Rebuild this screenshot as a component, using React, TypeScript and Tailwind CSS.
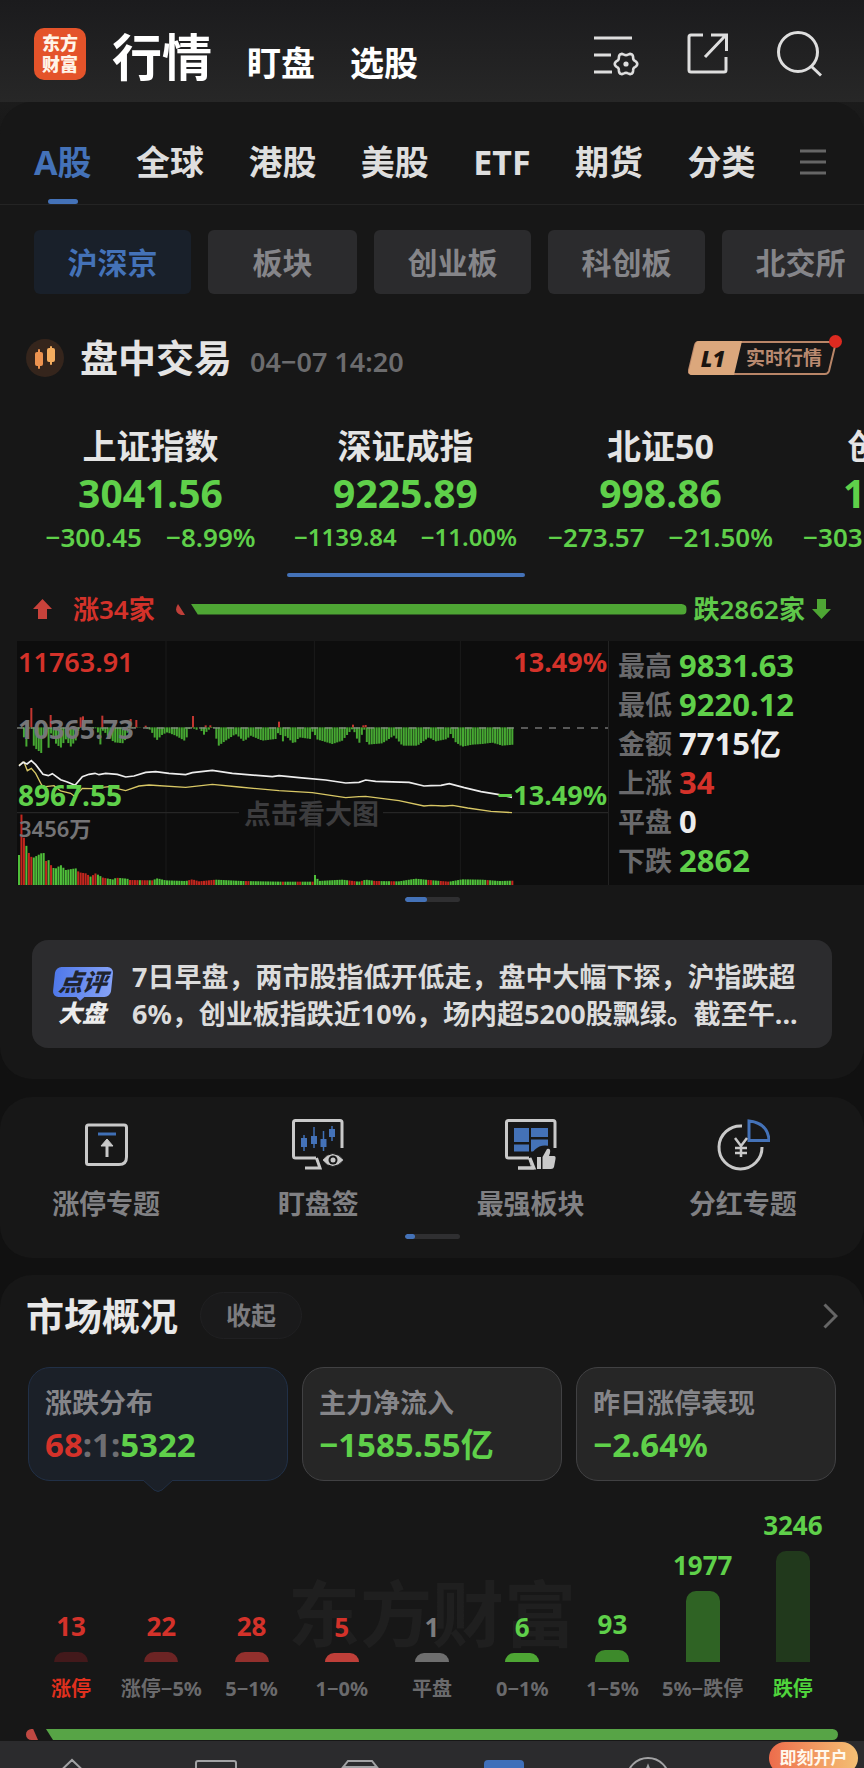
import { useState } from "react";
import clsx from "clsx";

const TABS = ["A股", "全球", "港股", "美股", "ETF", "期货", "分类"];

const BOARDS = [
  { label: "沪深京", width: "w-[157px]" },
  { label: "板块", width: "w-[149px]" },
  { label: "创业板", width: "w-[157px]" },
  { label: "科创板", width: "w-[157px]" },
  { label: "北交所", width: "w-[157px]" },
];

const INDICES = [
  { name: "上证指数", value: "3041.56", change: "−300.45", percent: "−8.99%" },
  { name: "深证成指", value: "9225.89", change: "−1139.84", percent: "−11.00%", small: true },
  { name: "北证50", value: "998.86", change: "−273.57", percent: "−21.50%" },
  { name: "创业板指", value: "1796.99", change: "−303.10", percent: "−14.43%" },
];

const STATS = [
  { label: "最高", value: "9831.63", color: "text-[#5fd04a]" },
  { label: "最低", value: "9220.12", color: "text-[#5fd04a]" },
  { label: "金额", value: "7715亿", color: "text-[#ececec]" },
  { label: "上涨", value: "34", color: "text-[#d4322a]" },
  { label: "平盘", value: "0", color: "text-[#ececec]" },
  { label: "下跌", value: "2862", color: "text-[#5fd04a]" },
];

const DISTRIBUTION = [
  { label: "涨停", count: 13, height: 10, bar: "bg-[#43191b]", text: "text-[#d4322a]", labelColor: "text-[#e0301e]" },
  { label: "涨停−5%", count: 22, height: 10, bar: "bg-[#6c2424]", text: "text-[#d4322a]" },
  { label: "5−1%", count: 28, height: 10, bar: "bg-[#93302d]", text: "text-[#d4322a]" },
  { label: "1−0%", count: 5, height: 9, bar: "bg-[#bf3f39]", text: "text-[#d4322a]" },
  { label: "平盘", count: 1, height: 9, bar: "bg-[#6e6e6e]", text: "text-[#7c7c7e]" },
  { label: "0−1%", count: 6, height: 9, bar: "bg-[#4ea634]", text: "text-[#5fd04a]" },
  { label: "1−5%", count: 93, height: 12, bar: "bg-[#3d8a2b]", text: "text-[#5fd04a]" },
  { label: "5%−跌停", count: 1977, height: 71, bar: "bg-[#2f6324]", text: "text-[#5fd04a]" },
  { label: "跌停", count: 3246, height: 111, bar: "bg-[#21391c]", text: "text-[#5fd04a]", labelColor: "text-[#4fd43c]" },
];

type Point = [number, number];

// Chart space: three units per pixel, zero line at y=292, volume base at y=765
const MOMENTUM: Point[] = [
  [57, 0], [72, 4], [80, 78], [88, 4], [98, 4], [105, 60], [128, 78], [135, 25], [143, 4], [148, 66], [158, 8], [170, 48],
  [185, 62], [200, 35], [215, 58], [230, 40], [240, 2], [295, 3], [303, 58], [312, 8], [330, 30], [345, 45],
  [375, 48], [390, 3], [435, 0], [455, 8], [472, 40], [490, 22], [505, 15], [530, 25], [560, 42], [570, 5],
  [582, 0], [590, 10], [600, 0], [615, 22], [622, 14], [635, 2], [648, 2], [655, 58], [680, 40], [710, 20], [735, 42], [755, 25], [790, 40], [830, 35],
  [842, 5], [848, 50], [860, 25], [885, 50], [900, 30], [935, 35], [944, 0], [950, 35], [1000, 50], [1030, 40],
  [1055, 10], [1062, 3], [1080, 50], [1095, 2], [1105, 52], [1150, 48], [1185, 25], [1210, 55], [1255, 55],
  [1290, 30], [1310, 42], [1345, 35], [1355, 20], [1370, 45], [1390, 58], [1420, 52], [1450, 50], [1480, 46],
  [1510, 55], [1543, 52],
];

const SPIKES: Point[] = [
  [97, 58], [155, 37], [245, 30], [252, 33], [310, 35], [395, 25], [412, 22], [440, 5], [582, 34],
  [620, 6], [634, 6], [840, 17], [1062, 8], [1093, 6], [1100, 7],
];

const VOLUME: Point[] = [
  [60, 90], [67, 215], [75, 140], [83, 115], [90, 95], [100, 80], [130, 97], [137, 95], [141, 72], [150, 75],
  [158, 55], [168, 48], [185, 60], [200, 45], [230, 50], [240, 38], [260, 35], [275, 25], [290, 35], [312, 22],
  [345, 16], [350, 22], [385, 19], [390, 15], [460, 14], [475, 20], [500, 14], [560, 12], [580, 17], [600, 11],
  [650, 16], [730, 12], [850, 10], [944, 10], [950, 40], [957, 12], [1030, 16], [1080, 10], [1100, 16],
  [1130, 12], [1200, 11], [1250, 19], [1290, 15], [1350, 10], [1390, 17], [1450, 16], [1500, 12], [1543, 13],
];

const RED_VOLUME: Point[] = [
  [64, 78], [86, 102], [141, 147], [152, 161], [232, 268], [280, 292], [310, 326], [350, 356], [388, 420],
  [428, 446], [455, 462], [565, 645], [740, 750], [850, 857], [890, 905], [935, 943], [1045, 1068], [1085, 1092],
  [1125, 1145], [1175, 1190], [1285, 1300], [1320, 1350], [1460, 1468], [1538, 1545],
];

const BAR_XS = Array.from({ length: 201 }, (_, i) => 60 + i * 7.4);

function heightAt(points: Point[], x: number) {
  const next = points.findIndex((p) => p[0] >= x);
  if (next === -1) return points[points.length - 1][1];
  if (next === 0) return points[0][1];
  const [x0, y0] = points[next - 1];
  const [x1, y1] = points[next];
  return y0 + ((y1 - y0) * (x - x0)) / (x1 - x0);
}

const INDEX_LINE =
  "60,408 72,397 84,402 97,392 110,404 132,433 148,437 160,431 185,449 205,456 228,466 250,440 270,433 288,430 300,434 320,430 355,433 380,441 405,438 440,427 470,425 510,430 560,434 580,428 640,421 700,430 820,440 840,437 900,443 980,450 1040,459 1080,457 1100,450 1130,454 1230,457 1275,468 1296,467 1326,466 1351,461 1396,473 1446,485 1496,493 1539,502";
const AVERAGE_LINE =
  "60,405 75,396 85,422 97,415 110,430 128,465 140,470 165,467 185,483 215,490 228,500 250,475 280,476 330,470 380,482 420,468 450,465 560,472 640,463 720,471 840,482 940,488 1040,503 1080,500 1100,499 1200,512 1275,528 1296,526 1336,528 1361,526 1406,534 1476,544 1539,548";

function MinuteChart() {
  return (
    <svg viewBox="54 33 1773 732" preserveAspectRatio="none" className="h-full w-full" aria-hidden="true">
      <g stroke="#1b1b1b" strokeWidth="3">
        <path d="M501 33V765M946 33V765M1384 33V765" />
        <path d="M54 548H720M1152 548H1827" stroke="#262626" strokeWidth="4" />
      </g>
      {BAR_XS.map((x) => (
        <rect key={x} x={x - 3} y="292" width="6" height={heightAt(MOMENTUM, x)} fill="#46a832" />
      ))}
      {SPIKES.map(([x, h]) => (
        <rect key={x} x={x - 3} y={292 - h} width="6" height={h} fill="#c23630" />
      ))}
      <path d="M54 294H1827" stroke="#8b8b8b" strokeWidth="4" strokeDasharray="21 21" strokeOpacity="0.8" />
      {BAR_XS.map((x) => {
        const h = heightAt(VOLUME, x);
        const red = RED_VOLUME.some(([from, to]) => x >= from && x <= to);
        return <rect key={x} x={x - 3} y={765 - h} width="6" height={h} fill={red ? "#c3271e" : "#4fbf3a"} />;
      })}
      <polyline points={AVERAGE_LINE} fill="none" stroke="#d8c765" strokeWidth="4" />
      <polyline points={INDEX_LINE} fill="none" stroke="#ededed" strokeWidth="5" />
    </svg>
  );
}

// Six-lobed outline around (33, 32)
const GEAR = Array.from({ length: 60 }, (_, i) => {
  const angle = (i * Math.PI) / 30;
  const r = 10 + 1.3 * Math.cos(6 * angle);
  return `${(33 + r * Math.cos(angle)).toFixed(2)},${(32 + r * Math.sin(angle)).toFixed(2)}`;
}).join(" ");

function FilterIcon() {
  return (
    <svg width="46" height="44" viewBox="0 0 46 44" fill="none" stroke="#dedede" strokeWidth="3">
      <path d="M1 6H39M1 23H18M1 40H19" />
      <polygon points={GEAR} strokeWidth="2.6" strokeLinejoin="round" />
      <circle cx="33" cy="32" r="2.6" fill="#dedede" stroke="none" />
    </svg>
  );
}

function ShareIcon() {
  return (
    <svg width="42" height="42" viewBox="0 0 42 42" fill="none" stroke="#dedede" strokeWidth="3">
      <path strokeLinejoin="round" d="M16 2H4Q2 2 2 4V37Q2 39 4 39H37Q39 39 39 37V24" />
      <path d="M24 2H39.5V18M38 3L18 24" />
    </svg>
  );
}

function SearchIcon() {
  return (
    <svg width="46" height="46" viewBox="0 0 46 46" fill="none" stroke="#dedede" strokeWidth="3">
      <circle cx="21" cy="21" r="19.5" />
      <path d="M34 35L44 44.5" />
    </svg>
  );
}

function CandleIcon() {
  return (
    <svg width="38" height="38" viewBox="0 0 38 38" className="shrink-0">
      <circle cx="19" cy="19" r="19" fill="#35251c" />
      <g fill="#ed9350">
        <rect x="9" y="13" width="8" height="14" rx="2" />
        <rect x="12" y="10" width="2" height="20" rx="1" />
      </g>
      <g fill="#f5ad5f">
        <rect x="21" y="9" width="8" height="14" rx="2" />
        <rect x="24" y="7" width="2" height="19" rx="1" />
      </g>
    </svg>
  );
}

function MonitorFrame() {
  return (
    <path
      d="M24 39H3.5Q1.5 39 1.5 37V3.5Q1.5 1.5 3.5 1.5H48Q50 1.5 50 3.5V29M13 49H28L24.5 39"
      fill="none"
      stroke="#c9c9c9"
      strokeWidth="3"
    />
  );
}

function LimitUpIcon() {
  return (
    <svg width="52" height="52" viewBox="0 0 52 52" fill="none" stroke="#c9c9c9" strokeWidth="3">
      <path d="M8.5 6H44Q46.5 6 46.5 8.5V38Q46.5 45.5 39 45.5H8.5Q6.5 45.5 6.5 43.5V8Q6.5 6 8.5 6Z" />
      <path d="M18 15H36" stroke="#3f6fb5" />
      <path d="M27 38V25" />
      <path d="M21 27L27 20L33 27Z" fill="#c9c9c9" strokeWidth="1" />
    </svg>
  );
}

function WatchIcon() {
  return (
    <svg width="52" height="52" viewBox="0 0 52 52">
      <MonitorFrame />
      <path d="M12 16V32M22 8V29M31.5 12V32M40 7V22" stroke="#3f6fb5" strokeWidth="1.5" />
      <path d="M9 19h6v9H9zM19 17h6v8h-6zM28.5 20h6v8h-6zM37 10h6v8h-6z" fill="#4472b8" />
      <path d="M30 41Q40.5 28 52 41Q40.5 54 30 41Z" fill="#c9c9c9" stroke="#171717" strokeWidth="1" />
      <circle cx="41" cy="41" r="4.5" fill="#171717" />
      <circle cx="41" cy="41" r="2.5" fill="#c9c9c9" />
    </svg>
  );
}

function StrongBoardIcon() {
  return (
    <svg width="52" height="52" viewBox="0 0 52 52">
      <MonitorFrame />
      <path d="M9 9h15v14H9zM26 9h17v9H26zM9 25.5h15v7H9zM26 20.5h17v12H26z" fill="#4472b8" />
      <circle cx="40" cy="41" r="14.5" fill="#171717" />
      <path d="M13 49H29L25 39" fill="none" stroke="#c9c9c9" strokeWidth="3" />
      <path d="M32 38h4v12h-4zM37.5 38L42 30Q46 29 45 34L44 37H49Q51 37 50.5 40L49 48Q48.5 50 46 50H37.5Z" fill="#c9c9c9" />
    </svg>
  );
}

function DividendIcon() {
  return (
    <svg width="54" height="52" viewBox="0 0 54 52" fill="none" stroke="#c9c9c9" strokeWidth="3">
      <path d="M26 7A21.5 21.5 0 1 0 46 28" />
      <path d="M33 2V21.5H53Q52 4 33 2Z" stroke="#4472b8" />
      <path d="M19 19L25 27L31 19M25 27V38M19 29H31M19 34H31" strokeWidth="2.5" />
    </svg>
  );
}

const TOPICS = [
  { label: "涨停专题", Icon: LimitUpIcon },
  { label: "盯盘签", Icon: WatchIcon },
  { label: "最强板块", Icon: StrongBoardIcon },
  { label: "分红专题", Icon: DividendIcon },
];

function Pager({ active }: { active: string }) {
  return (
    <div className="mx-auto mt-3 h-[5px] w-[55px] overflow-hidden rounded-full bg-[#2f2f31]">
      <div className={clsx("h-full rounded-full bg-[#4472b8]", active)} />
    </div>
  );
}

function Header() {
  return (
    <header className="flex h-[102px] shrink-0 items-start bg-linear-to-b from-[#1b1b1d] to-[#272727] pr-[41px] pl-[34px]">
      <div className="mt-7 flex size-[52px] flex-col items-center justify-center rounded-[10px] bg-[#e4532a] text-[18px] leading-[21px] font-black text-[#fff4e8]">
        <span>东方</span>
        <span>财富</span>
      </div>
      <nav className="mt-[21px] ml-[26px] flex items-baseline gap-[35px] font-bold text-white">
        <button className="text-[50px] leading-[72px]">行情</button>
        <button className="text-[34px]">盯盘</button>
        <button className="text-[34px]">选股</button>
      </nav>
      <div className="mt-[31px] ml-auto flex items-center gap-12">
        <button aria-label="设置">
          <FilterIcon />
        </button>
        <button aria-label="分享">
          <ShareIcon />
        </button>
        <button aria-label="搜索">
          <SearchIcon />
        </button>
      </div>
    </header>
  );
}

function IndexStrip() {
  return (
    <div className="mt-[42px] flex overflow-hidden pl-[23px]">
      {INDICES.map((item) => (
        <button key={item.name} className="flex w-[255px] shrink-0 flex-col items-center text-[#5fd04a]">
          <span className="text-[34px] leading-[44px] font-bold text-[#e4e4e4]">{item.name}</span>
          <span className="text-[39px] leading-[50px] font-bold">{item.value}</span>
          <span
            className={clsx(
              "flex gap-6 leading-[38px] font-semibold whitespace-nowrap",
              item.small ? "text-[24px]" : "text-[26px]"
            )}
          >
            <span>{item.change}</span>
            <span>{item.percent}</span>
          </span>
          <span
            className={clsx("mt-[17px] h-1 w-[238px] rounded-full", item.name === "深证成指" ? "bg-[#4472b8]" : "bg-transparent")}
          />
        </button>
      ))}
    </div>
  );
}

function Market() {
  const [tab, setTab] = useState("A股");
  const [board, setBoard] = useState("沪深京");

  return (
    <section className="shrink-0 rounded-4xl bg-[#171717] pb-[31px]">
      {/* Market tabs */}
      <nav className="flex h-[103px] justify-between border-b border-[#242424] pr-[38px] pl-[34px]">
        {TABS.map((name) => (
          <button
            key={name}
            onClick={() => setTab(name)}
            className={clsx("relative pt-[19px] text-[34px] font-bold", tab === name ? "text-[#4472b8]" : "text-[#dedede]")}
          >
            {name}
            {tab === name && (
              <span className="absolute bottom-0 left-1/2 h-[5px] w-[30px] -translate-x-1/2 rounded-full bg-[#4472b8]" />
            )}
          </button>
        ))}
        <button aria-label="更多" className="pt-[17px]">
          <svg width="26" height="28" viewBox="0 0 26 28" stroke="#666" strokeWidth="3">
            <path d="M0 3H26M0 14H26M0 25H26" />
          </svg>
        </button>
      </nav>

      {/* Boards */}
      <div className="flex gap-[17px] overflow-hidden pt-[25px] pl-[34px]">
        {BOARDS.map((item) => (
          <button
            key={item.label}
            onClick={() => setBoard(item.label)}
            className={clsx(
              "h-16 shrink-0 rounded-md text-[30px] font-bold",
              item.width,
              board === item.label ? "bg-[#19202a] text-[#4472b8]" : "bg-[#2b2b2d] text-[#858589]"
            )}
          >
            {item.label}
          </button>
        ))}
      </div>

      {/* Session */}
      <div className="mt-[40px] flex h-12 items-center px-[26px]">
        <CandleIcon />
        <div className="ml-4 flex items-baseline gap-[18px]">
          <h2 className="text-[38px] leading-[48px] font-bold text-[#e4e4e4]">盘中交易</h2>
          <time className="text-[27px] font-semibold text-[#6c6c6e]">04−07 14:20</time>
        </div>
        <button className="relative ml-auto flex h-[34px] w-[150px] items-center">
          <svg width="150" height="34" viewBox="0 0 150 34" className="absolute inset-0" aria-hidden="true">
            <path d="M10 1H148L141 30Q140 33 137 33H4Q0 33 1 29L7 4Q8 1 10 1Z" fill="none" stroke="#b98668" strokeWidth="2" />
            <path d="M10 0H54L46 34H4Q0 34 1 29L7 4Q8 0 11 0Z" fill="#dba77c" />
          </svg>
          <span className="relative w-[50px] text-center text-[22px] leading-[34px] font-black text-[#1b1510] italic">L1</span>
          <span className="relative ml-2 text-[19px] leading-[34px] font-bold whitespace-nowrap text-[#b98a70]">实时行情</span>
          <span className="absolute -top-1.5 -right-1 size-[13px] rounded-full bg-[#dd2a20]" />
        </button>
      </div>

      <IndexStrip />

      {/* Advancers and decliners */}
      <div className="mt-4 flex h-8 items-center px-[33px] text-[26px] font-semibold">
        <svg width="19" height="20" viewBox="0 0 19 20" fill="#c8423b">
          <path d="M9.5 0L19 10H14V20H5V10H0Z" />
        </svg>
        <span className="ml-[21px] text-[#d4322a]">涨34家</span>
        <svg width="10" height="11" viewBox="0 0 10 11" className="ml-5" fill="#bf3f39">
          <path d="M3 0L10 11H6Q-2 8 3 0Z" />
        </svg>
        <div className="ml-1.5 h-[11px] flex-1 rounded-r-full bg-[#4ea634] [clip-path:polygon(0_0,100%_0,100%_100%,7px_100%)]" />
        <span className="ml-[7px] text-[#5fc84a]">跌2862家</span>
        <svg width="19" height="20" viewBox="0 0 19 20" className="ml-[7px]" fill="#4ea634">
          <path d="M9.5 20L19 10H14V0H5V10H0Z" />
        </svg>
      </div>

      {/* Minute chart */}
      <div className="mt-4 ml-[17px] flex h-[244px] bg-[#0d0d0d]">
        <div className="relative min-w-0 flex-1 text-[27px] leading-[30px] font-semibold">
          <MinuteChart />
          <span className="absolute top-1.5 left-px text-[#d4322a]">11763.91</span>
          <span className="absolute top-[73px] left-px font-bold text-[#767678]">10365.73</span>
          <span className="absolute top-[139px] left-px text-[28px] font-bold text-[#5fd04a]">8967.55</span>
          <span className="absolute top-[172px] left-0.5 text-[22px] text-[#747476]">3456万</span>
          <span className="absolute top-1.5 right-px font-bold text-[#d4322a]">13.49%</span>
          <span className="absolute top-[139px] right-px font-bold text-[#5fd04a]">−13.49%</span>
          <button className="absolute top-[158px] left-[227px] font-bold text-[#3c3c3e]">点击看大图</button>
        </div>
        <dl className="w-64 border-l border-[#222] py-[5px] pl-[9px]">
          {STATS.map((item) => (
            <div key={item.label} className="flex h-[39px] items-center gap-[7px]">
              <dt className="text-[27px] leading-[39px] font-bold text-[#69696b]">{item.label}</dt>
              <dd className={clsx("text-[31px] leading-[39px] font-bold", item.color)}>{item.value}</dd>
            </div>
          ))}
        </dl>
      </div>
      <Pager active="w-[22px]" />

      {/* Commentary */}
      <a href="#comment" className="mx-8 mt-[38px] flex rounded-2xl bg-[#2c2c2e] pt-[18px] pr-6 pb-4 pl-[22px]">
        <span className="mt-[9px] flex w-[60px] shrink-0 flex-col items-start text-[24px] font-black italic">
          <span className="relative w-[58px] -skew-x-6 rounded-md bg-linear-to-r from-[#4f78ea] to-[#86a2f6] text-center leading-[30px] text-[#20242f]">
            点评
            <span className="absolute -bottom-1 left-6 border-x-4 border-t-4 border-x-transparent border-t-[#6d8cf0]" />
          </span>
          <span className="mt-0.5 ml-1 leading-[28px] text-[#ececec]">大盘</span>
        </span>
        <span className="ml-[18px] text-[27px] leading-[37px] font-bold text-[#dcdcdc]">
          7日早盘，两市股指低开低走，盘中大幅下探，沪指跌超6%，创业板指跌近10%，场内超5200股飘绿。截至午...
        </span>
      </a>
    </section>
  );
}

function Topics() {
  return (
    <section className="mt-[18px] shrink-0 rounded-4xl bg-[#171717] pt-[22px] pb-[19px]">
      <div className="grid grid-cols-4 pr-[15px]">
        {TOPICS.map(({ label, Icon }) => (
          <a key={label} href="#topic" className="flex flex-col items-center gap-[15px]">
            <Icon />
            <span className="text-[27px] leading-[36px] font-bold text-[#808083]">{label}</span>
          </a>
        ))}
      </div>
      <Pager active="w-2.5" />
    </section>
  );
}

const CARD = "relative rounded-[22px] border pt-4 pb-3 pl-4 text-left";

function Overview() {
  return (
    <section className="mt-[17px] shrink-0 rounded-t-4xl bg-[#171717] px-[26px] pt-[17px] pb-px">
      <div className="flex h-[47px] items-center">
        <h2 className="text-[38px] font-bold text-[#e8e8e8]">市场概况</h2>
        <button className="ml-[22px] h-full w-[102px] rounded-full border border-[#202022] bg-[#1a1a1b] text-[25px] font-bold text-[#7c7c7f]">
          收起
        </button>
        <button aria-label="查看详情" className="ml-auto">
          <svg width="15" height="26" viewBox="0 0 15 26" fill="none" stroke="#666" strokeWidth="3">
            <path d="M1.5 1.5L13 13L1.5 24.5" />
          </svg>
        </button>
      </div>

      <div className="mx-0.5 mt-7 grid grid-cols-3 gap-3.5">
        <button className={clsx(CARD, "border-[#213047] bg-[#1b2028]")}>
          <span className="block text-[27px] leading-[38px] font-bold text-[#858589]">涨跌分布</span>
          <span className="block text-[33px] leading-[46px] font-bold text-[#5fd04a]">
            <span className="text-[#d4322a]">68</span>
            <span className="text-[#6e6e72]">:1:</span>5322
          </span>
          <svg width="30" height="12" viewBox="0 0 30 12" className="absolute top-full left-1/2 -translate-x-1/2">
            <path d="M0 0L11 10Q15 13 19 10L30 0Z" fill="#1b2028" />
            <path d="M0 0L11 10Q15 13 19 10L30 0" fill="none" stroke="#213047" />
          </svg>
        </button>
        <button className={clsx(CARD, "border-[#414143] bg-[#262626]")}>
          <span className="block text-[27px] leading-[38px] font-bold text-[#858589]">主力净流入</span>
          <span className="block text-[33px] leading-[46px] font-bold text-[#5fd04a]">−1585.55亿</span>
        </button>
        <button className={clsx(CARD, "border-[#414143] bg-[#262626]")}>
          <span className="block text-[27px] leading-[38px] font-bold text-[#858589]">昨日涨停表现</span>
          <span className="block text-[33px] leading-[46px] font-bold text-[#5fd04a]">−2.64%</span>
        </button>
      </div>

      {/* Distribution of gains and losses */}
      <div className="relative mt-[26px]">
        <span
          aria-hidden="true"
          className="absolute bottom-[50px] left-1/2 -translate-x-1/2 text-[72px] leading-[80px] font-bold whitespace-nowrap text-[#1f1f1f]"
        >
          东方财富
        </span>
        <div className="relative grid grid-cols-9">
          {DISTRIBUTION.map((item) => (
            <div key={item.label} className="flex flex-col items-center">
              <div className="flex h-[155px] flex-col items-center justify-end">
                <span className={clsx("mb-2 text-[26px] leading-[36px] font-bold", item.text)}>{item.count}</span>
                <div className={clsx("w-[34px] rounded-t-[10px]", item.bar)} style={{ height: item.height }} />
              </div>
              <span
                className={clsx(
                  "mt-[13px] text-[20px] leading-[28px] font-bold whitespace-nowrap",
                  item.labelColor ?? "text-[#6a6a6c]"
                )}
              >
                {item.label}
              </span>
            </div>
          ))}
        </div>
      </div>

      <div className="mt-[26px] flex h-[11px] gap-2">
        <div className="w-3 rounded-l-full bg-[#bf4842] [clip-path:polygon(0_0,60%_0,100%_100%,0_100%)]" />
        <div className="flex-1 rounded-r-full bg-[#57a446] [clip-path:polygon(0_0,100%_0,100%_100%,7px_100%)]" />
      </div>
    </section>
  );
}

function BottomNav() {
  return (
    <nav className="relative grid h-24 shrink-0 grid-cols-6 items-start justify-items-center bg-[#2b2b2d] pt-4">
      <button aria-label="首页">
        <svg width="44" height="44" viewBox="0 0 44 44" fill="none" stroke="#a2a2a4" strokeWidth="2">
          <path d="M2 22L22 3L42 22M7 18V42H37V18" />
        </svg>
      </button>
      <button aria-label="自选">
        <svg width="42" height="44" viewBox="0 0 42 44" fill="none" stroke="#a2a2a4" strokeWidth="2">
          <rect x="1" y="4" width="40" height="38" rx="2" />
        </svg>
      </button>
      <button aria-label="理财">
        <svg width="42" height="44" viewBox="0 0 42 44" fill="none" stroke="#a2a2a4" strokeWidth="2">
          <path d="M9 4H33L41 14V42H1V14ZM4 10H38" />
        </svg>
      </button>
      <button aria-label="行情" className="pt-[3px]">
        <span className="block size-10 rounded-t-sm bg-[#3f6fb9]" />
      </button>
      <button aria-label="资讯">
        <svg width="44" height="44" viewBox="0 0 44 44" fill="none" stroke="#a2a2a4" strokeWidth="2">
          <circle cx="22" cy="22" r="21" />
          <path d="M22 9L16 24L22 35L28 24Z" />
        </svg>
      </button>
      <a
        href="#open"
        className="absolute top-px right-1.5 flex h-8 w-[89px] items-center justify-center rounded-full bg-linear-to-r from-[#ec6c4c] to-[#f3bf74] text-[17px] font-bold whitespace-nowrap text-[#fff8ec]"
      >
        即刻开户
      </a>
    </nav>
  );
}

export default function App() {
  return (
    <div className="flex h-screen flex-col overflow-hidden bg-[#111111] font-['Noto_Sans','Noto_Sans_CJK_SC',sans-serif]">
      <div className="flex shrink-0 flex-col bg-linear-to-b from-[#272727] from-[0px] to-[#111111] to-[200px]">
        <Header />
        <Market />
      </div>
      <Topics />
      <Overview />
      <BottomNav />
    </div>
  );
}
